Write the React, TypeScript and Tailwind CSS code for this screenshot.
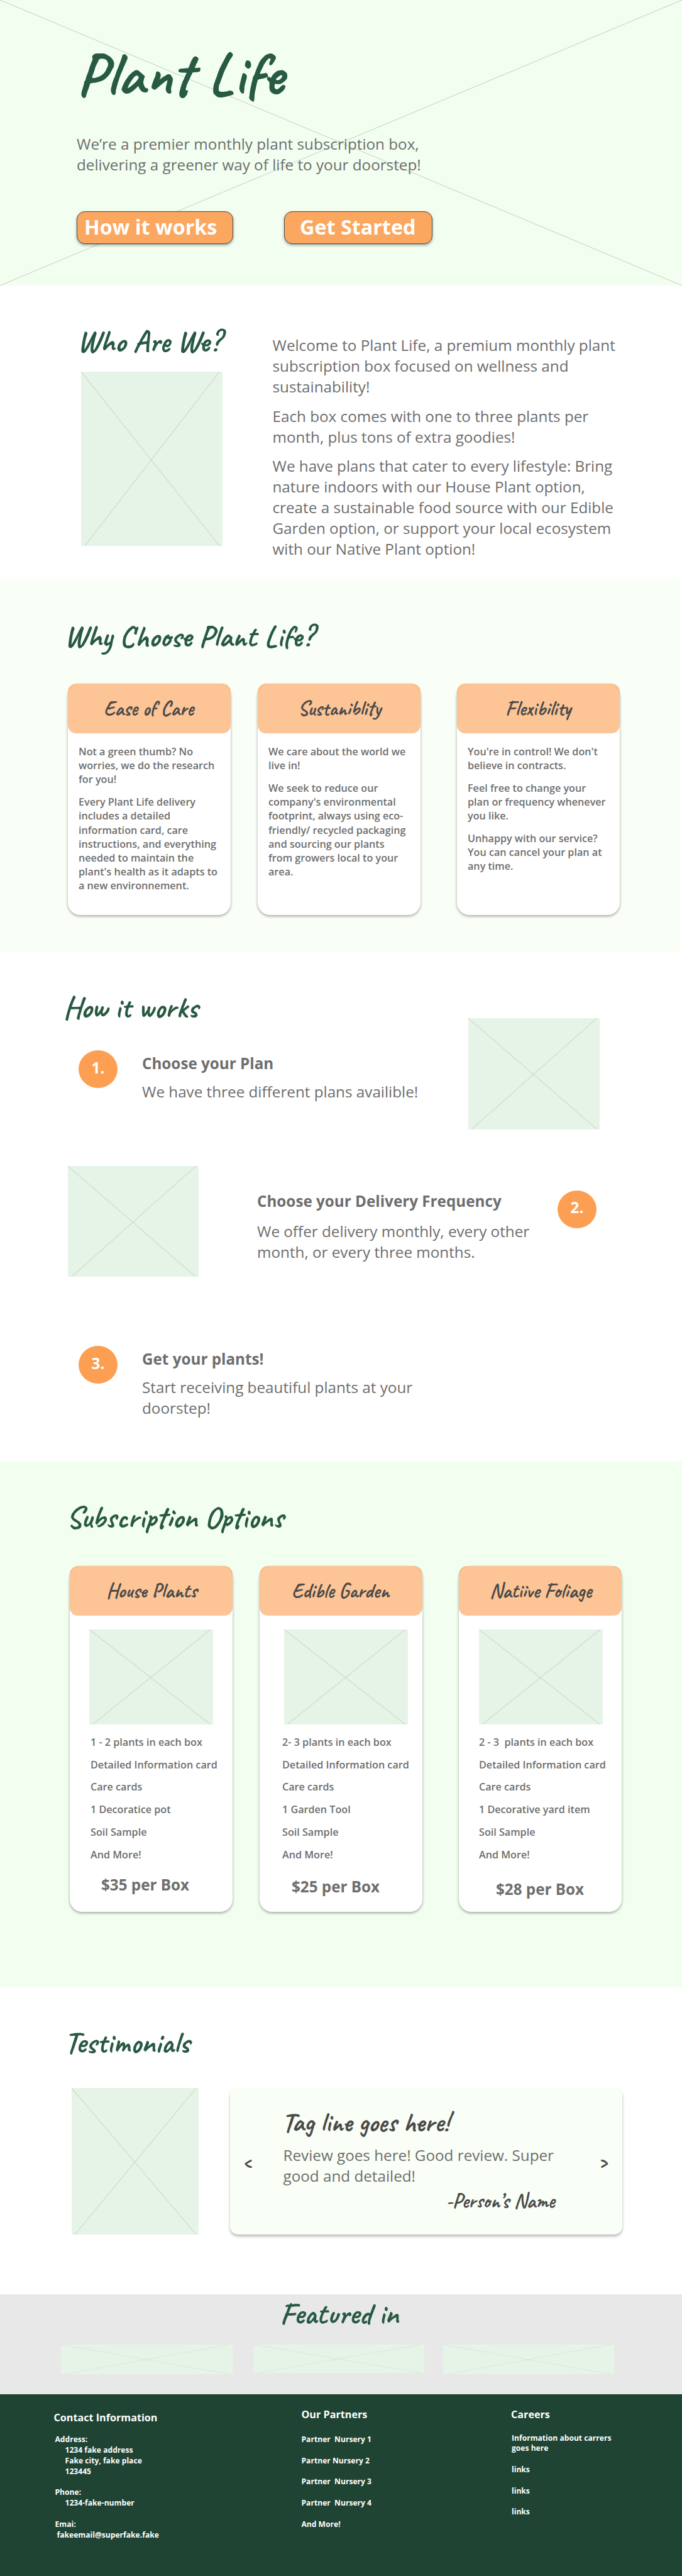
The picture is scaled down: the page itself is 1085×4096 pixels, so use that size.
import React from "react";

type BoxProps = { className?: string; faint?: boolean };

/* Image placeholder: a tinted box crossed by two thin diagonals. */
function Placeholder({ className = "", faint = false }: BoxProps) {
  return (
    <div className={`shrink-0 bg-[#e6f4e7] ${className}`}>
      <svg
        className={`block h-full w-full ${faint ? "opacity-10" : "opacity-30"}`}
        viewBox="0 0 100 100"
        preserveAspectRatio="none"
        fill="none"
        stroke="#505050"
        strokeWidth="0.8"
      >
        <line x1="0" y1="0" x2="97.9" y2="100" vectorEffect="non-scaling-stroke" />
        <line x1="97.9" y1="0" x2="2.6" y2="100" vectorEffect="non-scaling-stroke" />
      </svg>
    </div>
  );
}

function Heading({ children, className = "" }: { children: React.ReactNode; className?: string }) {
  return (
    <h2
      className={`w-max font-['Caveat',cursive] text-[48.5px] leading-[44px] font-bold whitespace-nowrap text-[#285943] ${className}`}
    >
      {children}
    </h2>
  );
}

const body = "text-[24.24px] leading-[33px] whitespace-nowrap";

function Lines({ lines }: { lines: string[] }) {
  return (
    <p>
      {lines.map((l) => (
        <span key={l} className="block">
          {l}
        </span>
      ))}
    </p>
  );
}

function CardShell({
  title,
  titleClass,
  className,
  children,
}: {
  title: string;
  titleClass: string;
  className: string;
  children: React.ReactNode;
}) {
  return (
    <article
      className={`w-[259px] shrink-0 rounded-[20px] bg-white shadow-[0_2px_4px_rgba(0,0,0,0.35)] ${className}`}
    >
      <header className="h-[79px] rounded-[13px] bg-[rgba(252,157,80,0.6)] pt-[25px]">
        <h3
          className={`w-max font-['Caveat',cursive] text-[32.3px] leading-[30px] font-bold whitespace-nowrap text-[#4a4a4a] ${titleClass}`}
        >
          {title}
        </h3>
      </header>
      {children}
    </article>
  );
}

function Badge({ children, className = "" }: { children: React.ReactNode; className?: string }) {
  return (
    <div
      className={`flex h-[60px] w-[62px] shrink-0 items-center justify-center rounded-[50%] bg-[#fc9f52] pb-1 text-[24.24px] font-bold text-white ${className}`}
    >
      {children}
    </div>
  );
}

const reasons = [
  {
    title: "Ease of Care",
    titleClass: "ml-[57px]",
    paragraphs: [
      ["Not a green thumb? No", "worries, we do the research", "for you!"],
      [
        "Every Plant Life delivery",
        "includes a detailed",
        "information card, care",
        "instructions, and everything",
        "needed to maintain the",
        "plant's health as it adapts to",
        "a new environnement.",
      ],
    ],
  },
  {
    title: "Sustaniblity",
    titleClass: "ml-[64px]",
    paragraphs: [
      ["We care about the world we", "live in!"],
      [
        "We seek to reduce our",
        "company's environmental",
        "footprint, always using eco-",
        "friendly/ recycled packaging",
        "and sourcing our plants",
        "from growers local to your",
        "area.",
      ],
    ],
  },
  {
    title: "Flexibility",
    titleClass: "ml-[77px]",
    paragraphs: [
      ["You're in control! We don't", "believe in contracts."],
      ["Feel free to change your", "plan or frequency whenever", "you like."],
      ["Unhappy with our service?", "You can cancel your plan at", "any time."],
    ],
  },
];

const cardMargins = ["", "ml-[43px]", "ml-[58px]"];

const plans = [
  {
    title: "House Plants",
    titleClass: "ml-[58px]",
    image: "ml-[31px]",
    list: "pl-[33px]",
    price: "$35 per Box",
    priceClass: "pl-[50px] pt-[20px]",
    items: ["1 - 2 plants in each box", "Detailed Information card", "Care cards", "1 Decoratice pot", "Soil Sample", "And More!"],
  },
  {
    title: "Edible Garden",
    titleClass: "ml-[51px]",
    image: "ml-[39px]",
    list: "pl-[36px]",
    price: "$25 per Box",
    priceClass: "pl-[51px] pt-[23px]",
    items: ["2- 3 plants in each box", "Detailed Information card", "Care cards", "1 Garden Tool", "Soil Sample", "And More!"],
  },
  {
    title: "Natiive Foliage",
    titleClass: "ml-[49px]",
    image: "ml-[32px]",
    list: "pl-[32px]",
    price: "$28 per Box",
    priceClass: "pl-[59px] pt-[27px]",
    items: ["2 - 3  plants in each box", "Detailed Information card", "Care cards", "1 Decorative yard item", "Soil Sample", "And More!"],
  },
];

export default function App() {
  return (
    <div className="h-[4096px] w-[1085px] overflow-hidden bg-white font-['Open_Sans',sans-serif] text-[#6e6e6e]">
      {/* Hero */}
      <section className="relative h-[454px] bg-[#f2fff0]">
        <svg
          className="absolute inset-0 h-full w-full opacity-30"
          viewBox="0 0 1085 454"
          fill="none"
          stroke="#606060"
          strokeWidth="1"
        >
          <line x1="0" y1="0" x2="1085" y2="454" />
          <line x1="1085" y1="0" x2="0" y2="454" />
        </svg>
        <div className="relative pt-[71px] pl-[122px]">
          <h1 className="w-max font-['Caveat',cursive] text-[97px] leading-[94px] font-bold whitespace-nowrap text-[#285943]">
            Plant Life
          </h1>
          <p className={`mt-[47px] ${body}`}>
            We’re a premier monthly plant subscription box,
            <br />
            delivering a greener way of life to your doorstep!
          </p>
          <div className="mt-[58px] flex gap-[81px] text-[32.3px] leading-[44px] font-bold text-white">
            <button className="h-[52px] w-[249px] rounded-[13px] border border-[#4f4a45] bg-[#fba75f] pb-[5px] pl-[11px] text-left whitespace-nowrap shadow-[0_2px_4px_rgba(0,0,0,0.35)]">
              How it works
            </button>
            <button className="h-[52px] w-[236px] rounded-[13px] border border-[#4f4a45] bg-[#fba75f] pb-[5px] pl-[24px] text-left whitespace-nowrap shadow-[0_2px_4px_rgba(0,0,0,0.35)]">
              Get Started
            </button>
          </div>
        </div>
      </section>

      {/* Who are we */}
      <section className="flex h-[467px] pl-[123px]">
        <div className="w-[310.5px] pt-[67px]">
          <Heading>Who Are We?</Heading>
          <Placeholder className="mt-[26px] ml-[6px] h-[277px] w-[225px]" />
        </div>
        <div className={`flex flex-col gap-[13.5px] pt-[78px] ${body}`}>
          <Lines lines={["Welcome to Plant Life, a premium monthly plant", "subscription box focused on wellness and", "sustainability!"]} />
          <Lines lines={["Each box comes with one to three plants per", "month, plus tons of extra goodies!"]} />
          <Lines
            lines={[
              "We have plans that cater to every lifestyle: Bring",
              "nature indoors with our House Plant option,",
              "create a sustainable food source with our Edible",
              "Garden option, or support your local ecosystem",
              "with our Native Plant option!",
            ]}
          />
        </div>
      </section>

      {/* Why choose */}
      <section className="h-[592px] w-[1082px] bg-[#f9fff6] pt-[68.5px] pl-[102.5px]">
        <Heading>Why Choose Plant Life?</Heading>
        <div className="mt-[53.5px] flex pl-[5.5px]">
          {reasons.map((r, i) => (
            <CardShell key={r.title} title={r.title} titleClass={r.titleClass} className={`h-[368px] ${cardMargins[i]}`}>
              <div className="flex flex-col gap-[13.5px] pt-[18px] pl-[17px] text-[16.16px] leading-[22.2px] font-semibold whitespace-nowrap">
                {r.paragraphs.map((p) => (
                  <Lines key={p[0]} lines={p} />
                ))}
              </div>
            </CardShell>
          ))}
        </div>
      </section>

      {/* How it works */}
      <section className="h-[811px] pt-[67px]">
        <div className="flex">
          <div className="w-[744.5px] pl-[100.5px]">
            <Heading>How it works</Heading>
            <div className="mt-[46px] flex pl-[24.5px]">
              <Badge>1.</Badge>
              <div className={`ml-[39px] pt-[4px] ${body}`}>
                <h3 className="font-bold">Choose your Plan</h3>
                <p className="mt-[12px]">We have three different plans availible!</p>
              </div>
            </div>
          </div>
          <Placeholder className="mt-[39px] h-[176.5px] w-[209px]" />
        </div>
        <div className="mt-[58px] flex pl-[108px]">
          <Placeholder className="h-[176.5px] w-[208px]" />
          <div className={`ml-[93px] w-[478px] pt-[39px] ${body}`}>
            <h3 className="font-bold">Choose your Delivery Frequency</h3>
            <p className="mt-[15.5px]">
              We offer delivery monthly, every other
              <br />
              month, or every three months.
            </p>
          </div>
          <Badge className="mt-[39px]">2.</Badge>
        </div>
        <div className="mt-[110px] flex pl-[125px]">
          <Badge>3.</Badge>
          <div className={`ml-[39px] pt-[4px] ${body}`}>
            <h3 className="font-bold">Get your plants!</h3>
            <p className="mt-[12px]">
              Start receiving beautiful plants at your
              <br />
              doorstep!
            </p>
          </div>
        </div>
      </section>

      {/* Subscription options */}
      <section className="h-[835px] bg-[#f2fff0] pt-[67px] pl-[105.5px]">
        <Heading>Subscription Options</Heading>
        <div className="mt-[54.5px] flex pl-[5.5px]">
          {plans.map((p, i) => (
            <CardShell key={p.title} title={p.title} titleClass={p.titleClass} className={`h-[550.5px] ${cardMargins[i]}`}>
              <Placeholder className={`mt-[22px] h-[151px] w-[197px] ${p.image}`} />
              <ul className={`flex flex-col gap-[13.5px] pt-[17.5px] text-[16.16px] leading-[22.2px] font-semibold whitespace-pre ${p.list}`}>
                {p.items.map((item) => (
                  <li key={item}>{item}</li>
                ))}
              </ul>
              <p className={`font-bold ${body} ${p.priceClass}`}>{p.price}</p>
            </CardShell>
          ))}
        </div>
      </section>

      {/* Testimonials */}
      <section className="h-[489px] pt-[66.5px] pl-[102.5px]">
        <Heading>Testimonials</Heading>
        <div className="mt-[50px] flex pl-[11px]">
          <Placeholder className="h-[233px] w-[202.5px]" />
          <div className="ml-[50px] flex h-[233px] w-[624px] rounded-[13px] bg-[#f9fff6] shadow-[0_3px_4px_rgba(0,0,0,0.28)]">
            <button className="mt-[104px] h-[28px] w-[84.5px] pl-[20px] text-left font-['Caveat',cursive] text-[32.3px] leading-[28px] font-bold text-[#4a4a4a]">
              &lt;
            </button>
            <div className="w-[501px] pt-[36px]">
              <h3 className="-ml-[2px] w-max font-['Caveat',cursive] text-[43px] leading-[38px] font-bold whitespace-nowrap text-[#4a4a4a]">
                Tag line goes here!
              </h3>
              <p className={`mt-[16.5px] ${body}`}>
                Review goes here! Good review. Super
                <br />
                good and detailed!
              </p>
              <p className="mt-[8.5px] ml-[259px] w-max font-['Caveat',cursive] text-[32.3px] leading-[30px] font-bold whitespace-nowrap text-[#4a4a4a]">
                -Person’s Name
              </p>
            </div>
            <button className="mt-[104px] h-[28px] text-left font-['Caveat',cursive] text-[32.3px] leading-[28px] font-bold text-[#4a4a4a]">
              &gt;
            </button>
          </div>
        </div>
      </section>

      {/* Featured in */}
      <section className="h-[159px] bg-[#e8e8e8] pt-[9px]">
        <Heading className="ml-[445.5px]">Featured in</Heading>
        <div className="mt-[26.5px] flex pl-[97px]">
          <Placeholder faint className="h-[47px] w-[272.5px]" />
          <Placeholder faint className="ml-[33px] h-[45px] w-[272.5px]" />
          <Placeholder faint className="ml-[29.5px] h-[47px] w-[272.5px]" />
        </div>
      </section>

      {/* Footer */}
      <footer className="flex h-[289px] bg-[#1f4433] pl-[85.5px] text-[12.12px] leading-[16.85px] font-bold whitespace-pre text-white">
        <div className="w-[394px] pt-[26px]">
          <h4 className="text-[16.16px] leading-[22px]">Contact Information</h4>
          <div className="pt-[16px] pl-[2px]">
            <p>Address:</p>
            <div className="pl-[16px]">
              <p>1234 fake address</p>
              <p>Fake city, fake place</p>
              <p>123445</p>
            </div>
            <p className="mt-[16.85px]">Phone:</p>
            <p className="pl-[16px]">1234-fake-number</p>
            <p className="mt-[16.85px]">Emai:</p>
            <p className="pl-[3px]">fakeemail@superfake.fake</p>
          </div>
        </div>
        <div className="w-[333.5px] pt-[21px]">
          <h4 className="text-[16.16px] leading-[22px]">Our Partners</h4>
          <div className="flex flex-col gap-[16.85px] pt-[21px]">
            <p>{"Partner  Nursery 1"}</p>
            <p>Partner Nursery 2</p>
            <p>{"Partner  Nursery 3"}</p>
            <p>{"Partner  Nursery 4"}</p>
            <p>And More!</p>
          </div>
        </div>
        <div className="pt-[21px]">
          <h4 className="text-[16.16px] leading-[22px]">Careers</h4>
          <div className="flex flex-col gap-[16.85px] pt-[18.5px] pl-[1px]">
            <p>
              Information about carrers
              <br />
              goes here
            </p>
            <p>links</p>
            <p>links</p>
            <p>links</p>
          </div>
        </div>
      </footer>
    </div>
  );
}
